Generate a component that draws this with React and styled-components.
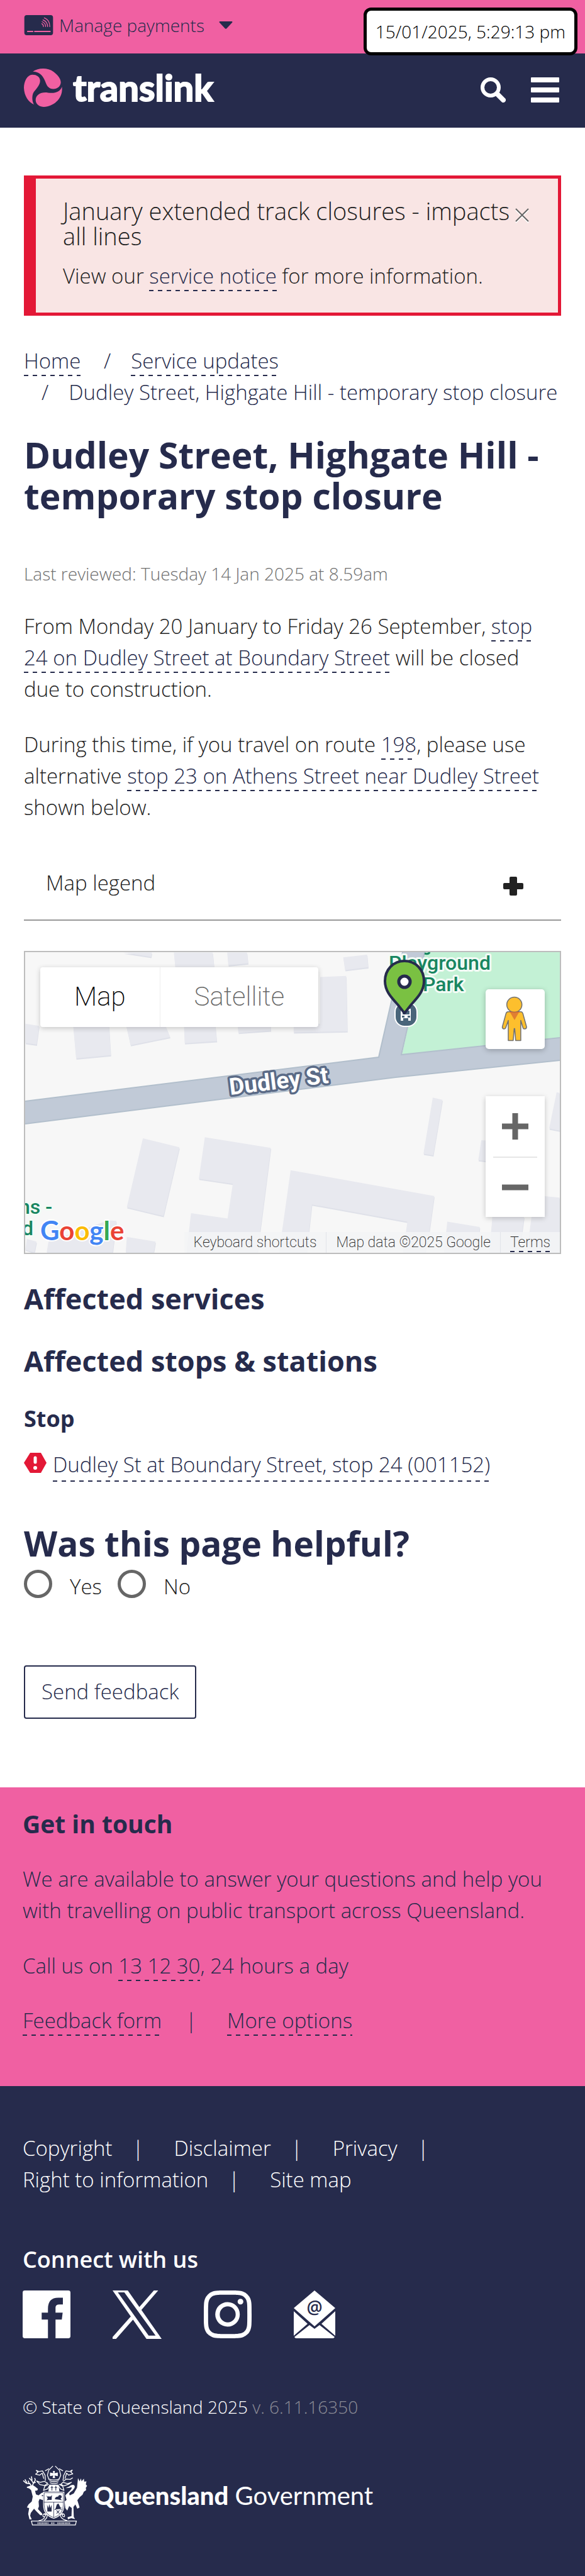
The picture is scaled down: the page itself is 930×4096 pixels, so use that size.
import React from 'react';
import styled, { createGlobalStyle, css } from 'styled-components';
import { BsInstagram } from 'react-icons/bs';

const navy = '#262b4c';
const pink = '#f060a2';
const red = '#e31836';

const dashes = css`
  color: inherit;
  text-decoration: none;
  padding-bottom: 2px;
  background: repeating-linear-gradient(90deg, ${navy} 0 7px, transparent 7px 14px) left bottom / 100% 2px no-repeat;
  box-decoration-break: clone;
  -webkit-box-decoration-break: clone;
`;

const GlobalStyle = createGlobalStyle`
  *, *::before, *::after { box-sizing: border-box; }
  body {
    margin: 0;
    background: #fff;
    color: #222;
    font: 300 33px/50px 'Open Sans', 'Noto Sans', sans-serif;
  }
  h1, h2, h3, p, ul { margin: 0; padding: 0; }
  button { font: inherit; color: inherit; background: none; border: 0; padding: 0; cursor: pointer; }
  svg { display: block; flex: none; }
`;

const DashedLink = styled.a`
  ${dashes}
  color: ${navy};
`;

/* Header */
const PaymentsBar = styled.div`
  display: flex;
  align-items: center;
  height: 85px;
  padding: 0 38px 6px;
  background: ${pink};
`;
const PaymentsButton = styled.button`
  display: flex;
  align-items: center;
  gap: 9px;
  color: ${navy};
  font-size: 28px;
  line-height: 44px;
`;
const Caret = styled.svg`
  margin-left: 14px;
`;
const Timestamp = styled.time`
  position: absolute;
  top: 12px;
  right: 12px;
  padding: 10px 14px;
  border: 5px solid #000;
  border-radius: 12px;
  background: #fff;
  color: #000;
  font-size: 28px;
  line-height: 46px;
`;
const NavBar = styled.header`
  display: flex;
  align-items: center;
  height: 118px;
  padding: 0 41px 2px 38px;
  background: ${navy};
`;
const Brand = styled.a`
  display: flex;
  align-items: center;
  gap: 17px;
  margin-right: auto;
  padding-bottom: 8px;
  color: #fff;
  text-decoration: none;
  font: 700 58px/70px Lato, sans-serif;
  -webkit-text-stroke: 2px #fff;
`;
const NavButton = styled.button`
  margin-left: 40px;
`;

/* Page body */
const Main = styled.main`
  display: flex;
  flex-direction: column;
  padding: 76px 38px 109px;
`;
const Alert = styled.section`
  padding: 31px 46px 33px 43px;
  border: 5px solid ${red};
  border-left-width: 19px;
  background: #f9e5e4;
`;
const AlertHead = styled.div`
  display: flex;
  justify-content: space-between;
  align-items: flex-start;
  margin-bottom: 19px;
`;
const AlertTitle = styled.h2`
  font-size: 38px;
  line-height: 40px;
  font-weight: 300;
`;
const CloseButton = styled.button`
  margin-top: 16px;
`;
const Breadcrumb = styled.nav`
  margin-top: 47px;
  color: ${navy};
`;
const Crumb = styled.span`
  white-space: nowrap;
  & + &::before {
    content: '/';
    padding: 0 32px 0 28px;
  }
`;
const PageTitle = styled.h1`
  margin-top: 42px;
  color: ${navy};
  font-size: 57px;
  line-height: 65px;
  font-weight: 700;
`;
const Reviewed = styled.p`
  margin-top: 70px;
  color: #707070;
  font-size: 28px;
  line-height: 42px;
`;
const Paragraph = styled.p`
  margin-top: 38px;
  padding-right: 8px;
`;
const LegendToggle = styled.button`
  display: flex;
  justify-content: space-between;
  align-items: center;
  height: 118px;
  margin-top: 37px;
  padding: 0 60px 0 35px;
  border-bottom: 2px solid #999;
`;
const PlusIcon = styled.svg`
  margin-top: 10px;
`;

/* Map */
const MapFrame = styled.section`
  position: relative;
  height: 482px;
  margin-top: 48px;
  overflow: hidden;
  border: 2px solid #bdbdbd;
  background: #f7f7f7;
  font-family: Roboto, sans-serif;
  font-weight: 200;
`;
const MapDrawing = styled.svg`
  width: 100%;
  height: 100%;
`;
const MapTypes = styled.div`
  position: absolute;
  top: 24px;
  left: 24px;
  display: flex;
  border-radius: 4px;
  background: #fff;
  box-shadow: 0 2px 8px rgba(0, 0, 0, 0.2);
`;
const MapType = styled.button`
  padding: 22px 54px 23px;
  color: ${(p) => (p.$active ? '#000' : '#666')};
  font-size: 42px;
  & + & { border-left: 1px solid #eee; }
`;
const PegmanButton = styled.button`
  position: absolute;
  top: 59px;
  right: 24px;
  border-radius: 5px;
  background: #fff;
  box-shadow: 0 2px 8px rgba(0, 0, 0, 0.25);
`;
const ZoomControls = styled.div`
  position: absolute;
  top: 229px;
  right: 24px;
  display: flex;
  flex-direction: column;
  width: 94px;
  padding: 0 12px;
  background: #fff;
  box-shadow: 0 2px 8px rgba(0, 0, 0, 0.2);
`;
const ZoomButton = styled.button`
  display: grid;
  place-items: center;
  height: 96px;
  & + & { border-top: 2px solid #e6e6e6; }
`;
const Attribution = styled.div`
  position: absolute;
  right: 0;
  bottom: 0;
  display: flex;
  background: rgba(243, 244, 246, 0.85);
  color: #222;
  font-size: 23px;
  line-height: 33px;
`;
const AttributionItem = styled.span`
  padding: 0 15px;
  & + & { border-left: 1px solid #e2e4ea; }
`;
const TermsLink = styled.a`
  ${dashes}
`;

const SectionTitle = styled.h2`
  margin-top: 42px;
  color: ${navy};
  font-size: 45px;
  line-height: 57px;
  font-weight: 700;
`;
const StopTitle = styled.h3`
  margin-top: 39px;
  color: ${navy};
  font-size: 36px;
  line-height: 50px;
  font-weight: 700;
`;
const StopRow = styled.div`
  display: flex;
  align-items: center;
  gap: 10px;
  margin-top: 23px;
`;
const AlertIcon = styled.svg`
  margin-bottom: 8px;
`;

/* Feedback */
const Feedback = styled.form`
  margin-top: 64px;
`;
const FeedbackTitle = styled.h2`
  color: ${navy};
  font-size: 55px;
  line-height: 68px;
  font-weight: 700;
`;
const Choices = styled.div`
  display: flex;
  gap: 25px;
  margin-top: 8px;
`;
const Choice = styled.label`
  display: flex;
  align-items: center;
  gap: 28px;
`;
const Radio = styled.input`
  appearance: none;
  width: 45px;
  height: 45px;
  margin: 0 0 8px;
  border: 5px solid #666;
  border-radius: 50%;
  background: #fff;
`;
const SendButton = styled.button`
  margin-top: 99px;
  padding: 15px 26px 16px;
  border: 2px solid ${navy};
  border-radius: 4px;
  color: ${navy};
  line-height: 50px;
`;

/* Footers */
const Contact = styled.section`
  padding: 33px 36px 79px;
  background: ${pink};
  color: ${navy};
`;
const ContactTitle = styled.h2`
  font-size: 39px;
  line-height: 50px;
  font-weight: 700;
`;
const ContactLinks = styled.div`
  display: flex;
  margin-top: 37px;
`;
const Separator = styled.span`
  padding: 0 48px 0 38px;
`;
const Footer = styled.footer`
  padding: 74px 36px 82px;
  background: ${navy};
  color: #fff;
`;
const LegalList = styled.ul`
  display: flex;
  flex-wrap: wrap;
  max-width: 720px;
  list-style: none;
`;
const LegalItem = styled.li`
  padding-right: 48px;
  &:not(:last-child)::after {
    content: '|';
    padding-left: 32px;
  }
  &:last-child { padding-right: 0; }
`;
const LegalLink = styled.a`
  color: inherit;
  text-decoration: none;
`;
const ConnectTitle = styled.h2`
  margin-top: 77px;
  font-size: 36px;
  line-height: 50px;
  font-weight: 600;
`;
const SocialRow = styled.div`
  display: flex;
  gap: 67px;
  margin-top: 24px;
`;
const SocialLink = styled.a`
  color: #fff;
`;
const Rights = styled.p`
  margin-top: 87px;
  font-size: 28px;
  line-height: 42px;
`;
const Version = styled.span`
  color: #8b8c96;
`;
const Government = styled.a`
  display: flex;
  align-items: center;
  gap: 10px;
  margin-top: 72px;
  color: #fff;
  text-decoration: none;
  font: 400 40px/50px Lato, sans-serif;
`;
const GovernmentName = styled.strong`
  font-weight: 900;
`;

const buildings = [
  '330,392 405,408 407,392', '466,392 570,392 574,448 470,448', '609,392 662,392 665,432 612,440',
  '920,410 984,400 987,447 925,458', '858,484 928,480 931,688 787,692 787,660 858,660',
  '68,660 105,668 98,738 68,732', '196,665 292,665 297,778 204,790', '338,665 443,665 456,710 350,740',
  '493,665 577,665 581,725 495,733', '637,665 725,665 726,685 639,694',
  '383,1091 481,1125 438,1383 340,1350',
  '549,1087 726,1127 690,1521 500,1521 512,1373 610,1393 624,1262 533,1243',
  '779,1211 1164,1308 1150,1450 1140,1521 1080,1521 1092,1405 836,1340 822,1521 748,1521',
  '1160,938 1186,946 1161,1155 1135,1149', '1492,918 1500,920 1500,1062 1472,1054',
  '1290,1098 1310,1100 1310,1178 1282,1173', '1199,1405 1286,1425 1280,1521 1190,1521',
  '1320,1380 1405,1387 1392,1521 1312,1521', '1430,1330 1455,1308 1500,1314 1500,1521 1412,1521',
  '340,1462 417,1480 412,1521 337,1521', '130,1480 290,1400 312,1402 302,1521 125,1521',
  '72,1470 98,1480 92,1521 68,1510',
];

function StreetMap() {
  const label = { paintOrder: 'stroke', strokeLinejoin: 'round' };
  return (
    <MapDrawing viewBox="0 0 850 478" preserveAspectRatio="xMidYMid slice" role="img" aria-label="Map of Dudley Street">
      <rect width="850" height="478" fill="#f7f7f7" />
      <g transform="translate(-40 -165) scale(.5931 .4225)" fill="#e8e9ef">
        {buildings.map((points) => (
          <React.Fragment key={points}>
            <polygon points={points} fill="#dfe1e9" transform="translate(1 5)" />
            <polygon points={points} />
          </React.Fragment>
        ))}
      </g>
      <path d="M635 0H850V136L599 163Z" fill="#c3f1d5" />
      <path d="M0 237L562 167L600 0H635L598 163L850 136V172L589 199L0 273Z" fill="#c1cad7" />
      <path d="M0 237L562 167L600 0M635 0L598 163L850 136M850 172L589 199L0 273" fill="none" stroke="#b2bfcc" strokeWidth="2" />
      <g fontWeight="500" fontSize="32" fill="#188661" stroke="#f3fbf6" strokeWidth="6" {...label}>
        <text x="578" y="28">Playground</text>
        <text x="632" y="62">Park</text>
        <text x="-10" y="416">ns -</text>
        <text x="-5" y="450">d</text>
      </g>
      <path d="M643 0Q641 4 635 2" fill="none" stroke="#188661" strokeWidth="3" />
      <text x="326" y="227" transform="rotate(-7 326 227)" fontWeight="700" fontSize="37" fill="#fff" stroke="#5a6a86" strokeWidth="7" {...label}>
        Dudley St
      </text>
      <rect x="588" y="80" width="35" height="38" rx="15" fill="#49657a" stroke="#fff" strokeWidth="2" />
      <path fillRule="evenodd" fill="#fff" d="M597 90h16v19h-4v-4h-8v4h-4zM600 93v6h11v-6zM599 101h4v3h-4zM608 101h4v3h-4z" />
      <path d="M603 14C585 14 572 28 572 46C572 61 581 71 592 83L603 97L614 83C625 71 634 61 634 46C634 28 621 14 603 14Z" fill="#7ac142" stroke={navy} strokeWidth="4" strokeLinejoin="round" />
      <circle cx="603" cy="47" r="9" fill="#fff" stroke={navy} strokeWidth="5" />
      <text x="24" y="458" fontFamily="Lato, sans-serif" fontSize="42" fontWeight="700" stroke="#fff" strokeWidth="4" {...label}>
        <tspan fill="#4285f4">G</tspan><tspan fill="#ea4335">o</tspan><tspan fill="#fbbc04">o</tspan>
        <tspan fill="#4285f4">g</tspan><tspan fill="#34a853">l</tspan><tspan fill="#ea4335">e</tspan>
      </text>
    </MapDrawing>
  );
}

function Pegman() {
  return (
    <svg width="94" height="95" viewBox="714 282 360 364" fill="#fdbf2d" stroke="#727272" strokeWidth="6" strokeLinejoin="round">
      <path d="M850 419H930Q938 420 941 430L963 510Q964 522 955 523Q945 525 942 518L928 472V594H897L891 522H888L882 594H852V472L836 518Q832 525 823 523Q814 520 816 510L838 430Q841 420 850 419Z" />
      <path d="M862 421H918L890 470Z" fill="#e17f31" stroke="none" />
      <circle cx="889" cy="376" r="46" />
      <path d="M860 421H920" stroke="#e0642a" strokeWidth="4" />
    </svg>
  );
}

function Crest() {
  return (
    <svg width="103" height="96" viewBox="52 78 398 370" fill="#fff" stroke="none">
      {/* deer */}
      <path d="M78 210L100 202L116 200L128 208L146 222L142 232L128 234L134 256L150 262L168 248L180 244V258L166 264L178 268V292L156 284L150 300L152 330L146 346L172 374V384H160L134 358L122 344L102 370L98 388L108 410H94L86 376L92 340L78 336L88 318L108 300L114 270L104 230L92 220L78 216Z" />
      <path d="M106 204L96 190L74 188L56 172M80 188L66 164M92 190L86 172M112 202L118 188L108 172L92 156M110 172L106 146M118 188L130 168L126 156M120 186L132 182" fill="none" stroke="#fff" strokeWidth="6" />
      {/* brolga */}
      <path d="M316 218L338 208Q350 194 366 198Q376 204 370 218Q360 236 344 244Q334 252 342 262L366 250L386 216L392 156L402 176L410 158L414 176L428 160L430 178L444 176L440 194L448 204L440 216L442 230L428 240L420 258L402 274L388 292L402 336L388 344L376 318L364 334L366 394L374 408L350 402L330 410L328 396L352 390L354 340L338 328L326 356L314 340L310 300L322 290L314 262Q326 250 344 232Q358 218 352 212L338 216Z" />
      {/* crest, helm and mantling */}
      <g fill="none" stroke="#fff" strokeWidth="5" strokeLinejoin="round">
        <path d="M134 108L152 116L174 112L190 140L192 172M134 108L146 120L132 132L156 138L172 126L182 160M358 106L340 116L318 112L304 140L300 172M358 106L348 120L360 130L334 138L322 126L312 160" />
        <path d="M138 174L160 182L186 176L206 188L186 202L158 196ZM360 154L344 164L320 162L302 176M352 182L328 190L300 182L286 194L306 204L334 194ZM212 194L188 206L180 232L206 222L218 200M276 194L298 206L306 232L284 222L270 200" />
        <path d="M238 82L212 108L204 138L214 166M252 82L278 108L286 138L274 166M190 112L214 98M300 112L276 98" />
        <path d="M214 162Q244 174 276 162M216 172Q244 184 274 172M220 184Q244 194 270 184" />
      </g>
      <path d="M238 112H250L248 126L268 122V144L248 140L252 156H236L240 140L220 144V122L240 126ZM216 196H272L278 238H210Z" />
      <path d="M232 204V232M224 214H240M256 204V232M248 214H264" stroke={navy} strokeWidth="4" />
      {/* shield */}
      <path d="M178 240H308V320Q308 386 243 406Q178 386 178 320Z" />
      <path d="M184 246H302V320Q302 380 243 399Q184 380 184 320ZM182 304H304M243 304V400" fill="none" stroke={navy} strokeWidth="3" />
      <path d="M194 256Q202 274 212 268Q224 274 232 260L230 290H216L200 292L206 280ZM250 286Q252 270 270 270Q272 256 288 262Q298 274 284 282L294 292L270 288ZM202 320L210 340L216 316L222 340L230 320V362H204ZM262 318L272 312L284 336L294 340L252 350Z" fill={navy} />
      <path d="M248 350Q272 338 292 350M260 354L278 374M278 354L260 374" fill="none" stroke={navy} strokeWidth="4" />
      {/* scroll */}
      <path d="M184 378Q200 380 188 392Q172 398 178 380Q186 368 202 382Q206 400 184 416M302 378Q288 380 300 392Q314 398 308 380Q300 368 284 382Q284 400 304 410L326 418M150 418Q180 412 188 396" fill="none" stroke="#fff" strokeWidth="5" />
      <path d="M106 420H382L376 444H112Z" fill="none" stroke="#fff" strokeWidth="5" />
      <path d="M144 433H210M228 433H248M266 433H346" stroke="#fff" strokeWidth="9" strokeDasharray="5 4" />
    </svg>
  );
}

export default function App() {
  return (
    <>
      <GlobalStyle />
      <PaymentsBar>
        <PaymentsButton type="button">
          <svg width="47" height="32" viewBox="0 0 174 122" fill="none" stroke={pink} strokeLinecap="round">
            <rect width="174" height="122" rx="15" fill={navy} stroke="none" />
            <path d="M20 99H51M63 99H156" strokeWidth="8" />
            <path d="M106 52Q116 58 116 70M108 40Q129 48 129 70M113 29Q141 40 141 70M121 17Q155 30 154 70" strokeWidth="5" />
          </svg>
          Manage payments
          <Caret width="22" height="12" viewBox="0 0 82 46" fill={navy}>
            <path d="M4 0H78Q84 3 79 8L46 43Q41 48 36 43L3 8Q-2 3 4 0Z" />
          </Caret>
        </PaymentsButton>
      </PaymentsBar>
      <Timestamp>15/01/2025, 5:29:13 pm</Timestamp>
      <NavBar>
        <Brand href="#home">
          <svg width="61" height="61" viewBox="54 380 232 232" fill={pink}>
            <path d="M108 398C140 376 196 372 234 400C268 426 278 450 277 466C275 488 256 504 232 504C206 503 194 488 186 466C174 432 156 400 108 398Z" />
            <path d="M116 598C106 590 98 546 114 522C130 500 152 480 152 452C150 430 132 417 105 417C74 418 54 458 54 497C56 545 80 582 116 598Z" />
            <path d="M284 490C272 522 240 532 200 526C160 520 125 536 125 572C127 598 150 612 175 612C236 608 292 560 284 490Z" />
          </svg>
          translink
        </Brand>
        <NavButton type="button" aria-label="Search">
          <svg width="40" height="40" viewBox="0 0 40 40" fill="none" stroke="#fff">
            <circle cx="16" cy="16" r="13" strokeWidth="6" />
            <path d="M27 27L36 36" strokeWidth="8" strokeLinecap="round" />
          </svg>
        </NavButton>
        <NavButton type="button" aria-label="Menu">
          <svg width="45" height="40" viewBox="0 0 45 40" fill="#fff">
            <rect width="45" height="8" rx="1" />
            <rect y="16" width="45" height="8" rx="1" />
            <rect y="32" width="45" height="8" rx="1" />
          </svg>
        </NavButton>
      </NavBar>

      <Main>
        <Alert>
          <AlertHead>
            <AlertTitle>January extended track closures - impacts all lines</AlertTitle>
            <CloseButton type="button" aria-label="Close">
              <svg width="22" height="24" viewBox="0 0 22 24" fill="none" strokeWidth="2">
                <path d="M1 3L21 23M21 3L1 23" stroke="#fff" />
                <path d="M1 1L21 21M21 1L1 21" stroke="#666" />
              </svg>
            </CloseButton>
          </AlertHead>
          <p>View our <DashedLink href="#notice">service notice</DashedLink> for more information.</p>
        </Alert>

        <Breadcrumb aria-label="Breadcrumb">
          <Crumb><DashedLink href="#home">Home</DashedLink></Crumb>{' '}
          <Crumb><DashedLink href="#updates">Service updates</DashedLink></Crumb>{' '}
          <Crumb>Dudley Street, Highgate Hill - temporary stop closure</Crumb>
        </Breadcrumb>

        <PageTitle>Dudley Street, Highgate Hill - temporary stop closure</PageTitle>
        <Reviewed>Last reviewed: Tuesday 14 Jan 2025 at 8.59am</Reviewed>
        <Paragraph>
          From Monday 20 January to Friday 26 September,{' '}
          <DashedLink href="#stop24">stop 24 on Dudley Street at Boundary Street</DashedLink> will be closed due to construction.
        </Paragraph>
        <Paragraph>
          During this time, if you travel on route <DashedLink href="#198">198</DashedLink>, please use alternative{' '}
          <DashedLink href="#stop23">stop 23 on Athens Street near Dudley Street</DashedLink> shown below.
        </Paragraph>

        <LegendToggle type="button">
          Map legend
          <PlusIcon width="32" height="30" viewBox="0 0 32 30" fill="#222">
            <path d="M12 0H20Q22 0 22 2V10H30Q32 10 32 12V18Q32 20 30 20H22V28Q22 30 20 30H12Q10 30 10 28V20H2Q0 20 0 18V12Q0 10 2 10H10V2Q10 0 12 0Z" />
          </PlusIcon>
        </LegendToggle>

        <MapFrame>
          <StreetMap />
          <MapTypes>
            <MapType type="button" $active>Map</MapType>
            <MapType type="button">Satellite</MapType>
          </MapTypes>
          <PegmanButton type="button" aria-label="Street View"><Pegman /></PegmanButton>
          <ZoomControls>
            <ZoomButton type="button" aria-label="Zoom in">
              <svg width="42" height="42" viewBox="0 0 42 42" stroke="#666" strokeWidth="9"><path d="M0 21H42M21 0V42" /></svg>
            </ZoomButton>
            <ZoomButton type="button" aria-label="Zoom out">
              <svg width="42" height="42" viewBox="0 0 42 42" stroke="#666" strokeWidth="9"><path d="M0 21H42" /></svg>
            </ZoomButton>
          </ZoomControls>
          <Attribution>
            <AttributionItem as="button" type="button">Keyboard shortcuts</AttributionItem>
            <AttributionItem>Map data ©2025 Google</AttributionItem>
            <AttributionItem><TermsLink href="#terms">Terms</TermsLink></AttributionItem>
          </Attribution>
        </MapFrame>

        <SectionTitle>Affected services</SectionTitle>
        <SectionTitle>Affected stops &amp; stations</SectionTitle>
        <StopTitle>Stop</StopTitle>
        <StopRow>
          <AlertIcon width="36" height="32" viewBox="0 0 36 32">
            <path d="M10 0H27L36 16L27 32H10L0 16Z" fill={red} />
            <path d="M18 8V15" stroke="#fff" strokeWidth="5" strokeLinecap="round" />
            <circle cx="18" cy="24" r="3" fill="#fff" />
          </AlertIcon>
          <DashedLink href="#001152">Dudley St at Boundary Street, stop 24 (001152)</DashedLink>
        </StopRow>

        <Feedback>
          <FeedbackTitle>Was this page helpful?</FeedbackTitle>
          <Choices>
            <Choice><Radio type="radio" name="helpful" value="yes" />Yes</Choice>
            <Choice><Radio type="radio" name="helpful" value="no" />No</Choice>
          </Choices>
          <SendButton type="button">Send feedback</SendButton>
        </Feedback>
      </Main>

      <Contact>
        <ContactTitle>Get in touch</ContactTitle>
        <Paragraph>We are available to answer your questions and help you with travelling on public transport across Queensland.</Paragraph>
        <Paragraph>Call us on <DashedLink href="tel:131230">13 12 30</DashedLink>, 24 hours a day</Paragraph>
        <ContactLinks>
          <span><DashedLink href="#feedback">Feedback form</DashedLink></span>
          <Separator>|</Separator>
          <span><DashedLink href="#options">More options</DashedLink></span>
        </ContactLinks>
      </Contact>

      <Footer>
        <LegalList>
          {['Copyright', 'Disclaimer', 'Privacy', 'Right to information', 'Site map'].map((name) => (
            <LegalItem key={name}><LegalLink href="#legal">{name}</LegalLink></LegalItem>
          ))}
        </LegalList>
        <ConnectTitle>Connect with us</ConnectTitle>
        <SocialRow>
          <SocialLink href="#facebook" aria-label="Facebook">
            <svg width="76" height="76" viewBox="35 75 221 288" preserveAspectRatio="none">
              <rect x="35" y="75" width="221" height="288" rx="10" ry="13" fill="#fff" />
              <path d="M152 363V250H123V209H152V185Q152 119 200 119H221V159H205Q187 159 187 177V209H220L216 250H187V363Z" fill={navy} />
            </svg>
          </SocialLink>
          <SocialLink href="#x" aria-label="X">
            <svg width="78" height="77" viewBox="450 71 226 297" preserveAspectRatio="none" fill="#fff">
              <path fillRule="evenodd" d="M450 71H520L676 368H606ZM474 83L616 348H648L504 83Z" />
              <path d="M640 71H660L582 192L572 174ZM450 368H466L545 248L534 230L450 356Z" />
            </svg>
          </SocialLink>
          <SocialLink href="#instagram" aria-label="Instagram"><BsInstagram size={76} /></SocialLink>
          <SocialLink href="#email" aria-label="Email">
            <svg width="66" height="76" viewBox="0 0 66 76" fill="#fff">
              <path d="M33 0L66 28L33 57L0 28ZM0 33L22 53L0 72ZM66 33L44 53L66 72ZM25 55L33 61L41 55L65 74Q64 76 62 76H4Q2 76 1 74Z" />
              <text x="33" y="37" textAnchor="middle" fontSize="28" fontWeight="600" fill={navy}>@</text>
            </svg>
          </SocialLink>
        </SocialRow>
        <Rights>© State of Queensland 2025 <Version>v. 6.11.16350</Version></Rights>
        <Government href="#qld">
          <Crest />
          <span><GovernmentName>Queensland</GovernmentName> Government</span>
        </Government>
      </Footer>
    </>
  );
}
